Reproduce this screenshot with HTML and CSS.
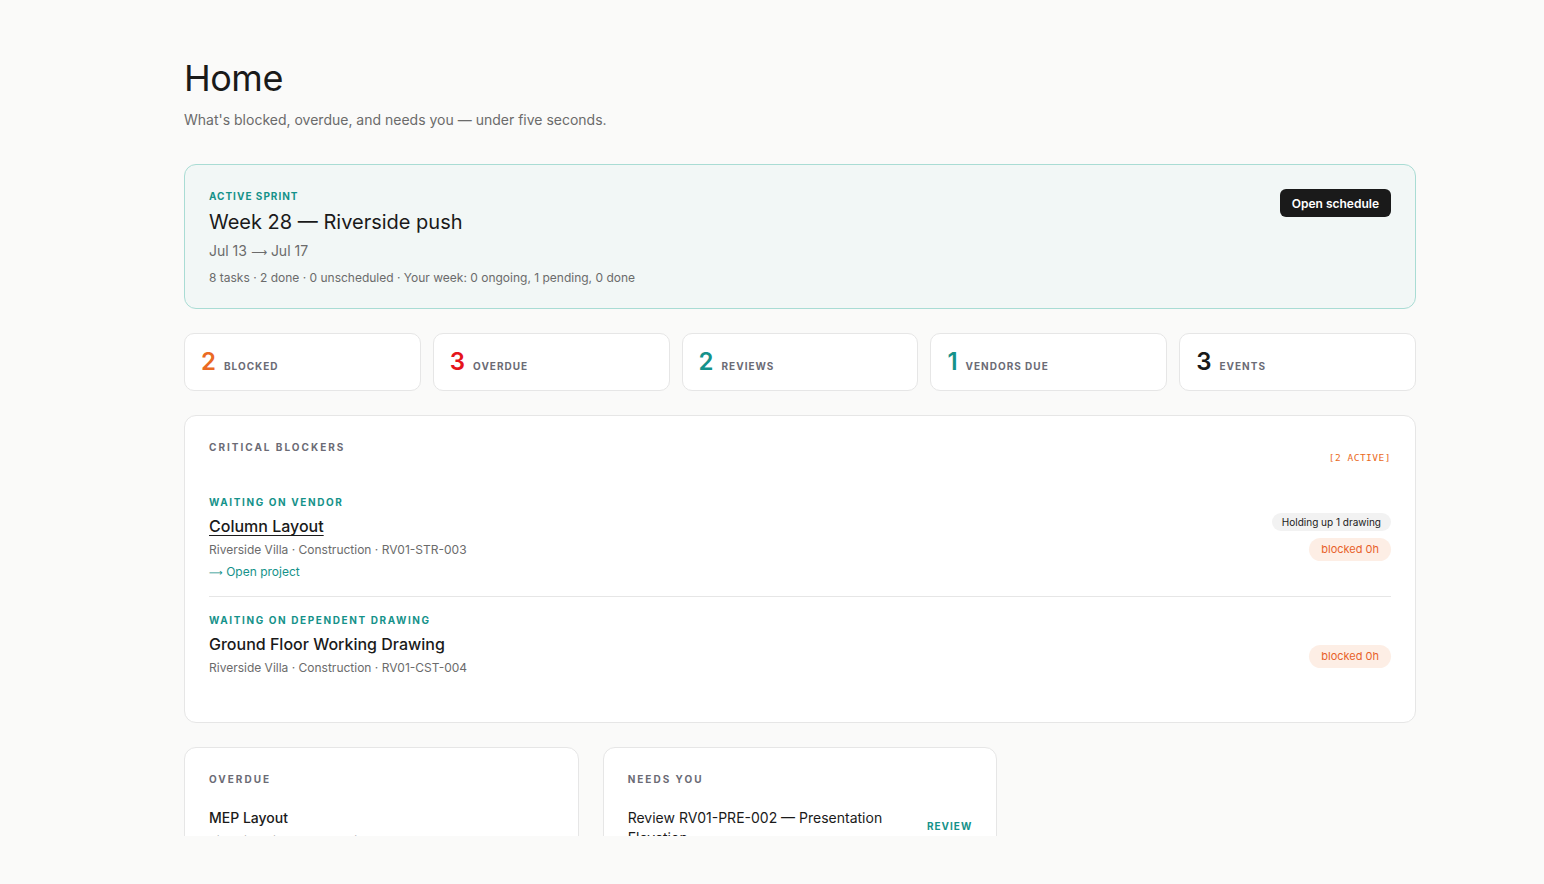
FILE: index.html
```html
<!DOCTYPE html>
<html lang="en">
<head>
    <meta charset="UTF-8">
    <meta name="viewport" content="width=device-width, initial-scale=1.0">
    <title>Home</title>
    <link rel="stylesheet" href="styles.css">
</head>
<body>

<main class="page">
    <div class="container">
        <header class="page-head">
            <h1>Home</h1>
            <p>What's blocked, overdue, and needs you — under five seconds.</p>
        </header>

        <section class="sprint">
            <div class="sprint-info">
                <div class="eyebrow teal sprint-eyebrow">Active sprint</div>
                <h2>Week 28 — Riverside push</h2>
                <div class="sprint-dates">Jul 13 <span class="arrow">⟶</span> Jul 17</div>
                <div class="sprint-stats">8 tasks · 2 done · 0 unscheduled · Your week: 0 ongoing, 1 pending, 0 done</div>
            </div>
            <button class="btn-dark">Open schedule</button>
        </section>

        <section class="stats">
            <div class="stat"><span class="stat-num orange">2</span><span class="stat-label">Blocked</span></div>
            <div class="stat"><span class="stat-num red">3</span><span class="stat-label">Overdue</span></div>
            <div class="stat"><span class="stat-num teal">2</span><span class="stat-label">Reviews</span></div>
            <div class="stat"><span class="stat-num teal">1</span><span class="stat-label">Vendors due</span></div>
            <div class="stat"><span class="stat-num">3</span><span class="stat-label">Events</span></div>
        </section>

        <section class="card blockers">
            <div class="card-head">
                <h3 class="section-title">Critical blockers</h3>
                <span class="count-tag">[2 ACTIVE]</span>
            </div>

            <div class="blocker">
                <div class="blocker-main">
                    <div class="eyebrow teal">Waiting on vendor</div>
                    <a class="blocker-title linked" href="#">Column Layout</a>
                    <div class="meta">Riverside Villa · Construction · RV01-STR-003</div>
                    <a class="open-link" href="#"><span class="arrow">⟶</span> Open project</a>
                </div>
                <div class="blocker-side">
                    <span class="pill pill-gray">Holding up 1 drawing</span>
                    <span class="pill pill-orange">blocked 0h</span>
                </div>
            </div>

            <div class="blocker">
                <div class="blocker-main">
                    <div class="eyebrow teal">Waiting on dependent drawing</div>
                    <div class="blocker-title">Ground Floor Working Drawing</div>
                    <div class="meta">Riverside Villa · Construction · RV01-CST-004</div>
                </div>
                <div class="blocker-side center">
                    <span class="pill pill-orange">blocked 0h</span>
                </div>
            </div>
        </section>

        <section class="lower">
            <div class="card small-card">
                <h3 class="section-title">Overdue</h3>
                <div class="row">
                    <div>
                        <div class="row-title">MEP Layout</div>
                        <div class="meta tight">Riverside Villa · Construction · RV01-MEP-005</div>
                    </div>
                </div>
            </div>
            <div class="card small-card">
                <h3 class="section-title">Needs you</h3>
                <div class="row">
                    <div class="row-title wrap">Review RV01-PRE-002 — Presentation Elevation</div>
                    <span class="eyebrow teal tag">Review</span>
                </div>
            </div>
        </section>
    </div>
</main>

<footer class="page-foot"></footer>

</body>
</html>
```

FILE: styles.css
```css
* {
    margin: 0;
    padding: 0;
    box-sizing: border-box;
}

body {
    font-family: 'Inter', 'Noto Sans', sans-serif;
    background-color: #fafaf9;
    color: #1a1a1a;
    height: 884px;
    display: flex;
    flex-direction: column;
    overflow: hidden;
}

.page {
    height: 836px;
    overflow: hidden;
}

.page-foot {
    height: 48px;
    background-color: #fafaf9;
}

.container {
    width: 1232px;
    margin-left: 184px;
    padding-top: 56px;
}

.page-head h1 {
    font-size: 36px;
    font-weight: 400;
    letter-spacing: -0.5px;
    line-height: 44px;
}

.page-head p {
    font-size: 14px;
    color: #6b6b6b;
    margin-top: 10px;
    line-height: 20px;
}

.teal { color: #15928a; }
.orange { color: #ea6a23; }
.red { color: #e5141b; }

.arrow {
    font-family: 'DejaVu Sans', sans-serif;
    font-size: 0.8em;
}

.eyebrow {
    font-size: 10px;
    font-weight: 700;
    text-transform: uppercase;
    letter-spacing: 1.6px;
    line-height: 14px;
}

.sprint-eyebrow {
    letter-spacing: 1px;
}

.sprint {
    margin-top: 34px;
    background-color: #f2f7f6;
    border: 1px solid #a9dcd4;
    border-radius: 12px;
    padding: 24px;
    height: 145px;
    display: flex;
    justify-content: space-between;
    align-items: flex-start;
}

.sprint h2 {
    font-size: 20px;
    font-weight: 400;
    line-height: 28px;
    margin-top: 5px;
}

.sprint-dates {
    font-size: 14px;
    color: #6b6b6b;
    margin-top: 5px;
    line-height: 20px;
}

.sprint-stats {
    font-size: 12px;
    color: #6b6b6b;
    margin-top: 6px;
    line-height: 18px;
}

.btn-dark {
    background-color: #1a1a1a;
    color: white;
    border: none;
    border-radius: 6px;
    font-family: inherit;
    font-size: 12px;
    font-weight: 600;
    padding: 0 12px;
    height: 28px;
    cursor: pointer;
}

.stats {
    margin-top: 24px;
    display: grid;
    grid-template-columns: repeat(5, 1fr);
    gap: 12px;
}

.stat {
    background-color: white;
    border: 1px solid #e6e6e6;
    border-radius: 10px;
    height: 58px;
    padding: 0 16px;
    display: flex;
    align-items: center;
    gap: 8px;
}

.stat-num {
    font-size: 24px;
    font-weight: 600;
    line-height: 28px;
}

.stat-label {
    font-size: 10px;
    font-weight: 700;
    text-transform: uppercase;
    letter-spacing: 1px;
    color: #6b6b75;
    margin-top: 7px;
}

.card {
    background-color: white;
    border: 1px solid #e6e6e6;
    border-radius: 12px;
    padding: 24px;
}

.blockers {
    margin-top: 24px;
    height: 308px;
}

.card-head {
    display: flex;
    justify-content: space-between;
    align-items: flex-start;
    margin-bottom: 17px;
}

.section-title {
    font-size: 10px;
    font-weight: 700;
    text-transform: uppercase;
    letter-spacing: 2px;
    color: #6b6b75;
    line-height: 14px;
}

.count-tag {
    font-family: 'DejaVu Sans Mono', 'Liberation Mono', monospace;
    font-size: 9.5px;
    color: #ea6a23;
    margin-top: 12px;
    letter-spacing: 0.5px;
}

.blocker {
    display: flex;
    justify-content: space-between;
    padding: 15px 0 14px;
}

.blocker + .blocker {
    border-top: 1px solid #e6e6e6;
    padding-top: 16px;
}

.blocker-title {
    display: block;
    font-size: 16px;
    font-weight: 500;
    line-height: 24px;
    color: #1a1a1a;
    margin-top: 5px;
    text-decoration: none;
}

.blocker-title.linked {
    text-decoration: underline;
    text-underline-offset: 3px;
}

.meta {
    font-size: 12px;
    color: #6b6b6b;
    line-height: 18px;
    margin-top: 3px;
}

.meta.tight {
    margin-top: 4px;
}

.open-link {
    display: inline-block;
    font-size: 12px;
    color: #15928a;
    text-decoration: none;
    margin-top: 4px;
    line-height: 18px;
}

.blocker-side {
    display: flex;
    flex-direction: column;
    align-items: flex-end;
    gap: 7px;
    padding-top: 18px;
}

.blocker-side.center {
    justify-content: center;
    padding-top: 22px;
}

.pill {
    border-radius: 999px;
    line-height: 1;
    white-space: nowrap;
}

.pill-gray {
    background-color: #f2f2f2;
    color: #1a1a1a;
    font-size: 10px;
    padding: 4px 10px;
}

.pill-orange {
    background-color: #fdeee5;
    color: #e8612a;
    font-size: 11px;
    padding: 6px 12px;
}

.lower {
    margin-top: 24px;
    display: grid;
    grid-template-columns: repeat(3, 1fr);
    gap: 24px;
}

.small-card {
    height: 200px;
}

.row {
    margin-top: 22px;
    display: flex;
    justify-content: space-between;
    align-items: center;
    gap: 24px;
}

.row-title {
    font-size: 14px;
    font-weight: 500;
    line-height: 20px;
}

.row-title.wrap {
    max-width: 270px;
    font-weight: 400;
}

.tag {
    letter-spacing: 1px;
    margin-top: -4px;
}
```
